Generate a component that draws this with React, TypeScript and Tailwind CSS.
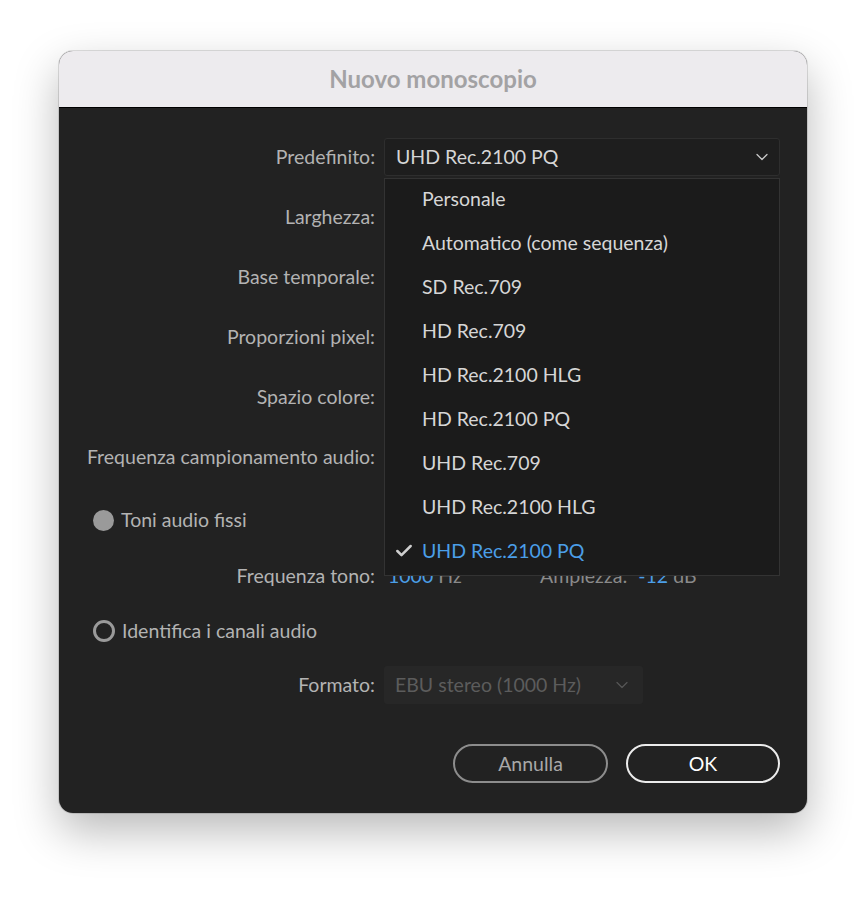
import { Check, ChevronDown } from 'lucide-react';

const presets = [
    'Personale',
    'Automatico (come sequenza)',
    'SD Rec.709',
    'HD Rec.709',
    'HD Rec.2100 HLG',
    'HD Rec.2100 PQ',
    'UHD Rec.709',
    'UHD Rec.2100 HLG',
    'UHD Rec.2100 PQ',
];

const selected = 'UHD Rec.2100 PQ';

function Label({ children }: { children: React.ReactNode }) {
    return (
        <div className="w-[316px] shrink-0 text-right pr-0 text-[#b3b3b3]">
            {children}
        </div>
    );
}

export default function App() {
    return (
        <div
            className="min-h-screen bg-white pt-[51px] pl-[59px]"
            style={{ fontFamily: 'Lato, "Liberation Sans", sans-serif' }}
        >
            <div className="w-[748px] h-[762px] rounded-[14px] overflow-hidden bg-[#222222] shadow-[0_18px_45px_rgba(0,0,0,0.28),0_0_0_1px_rgba(0,0,0,0.12)] flex flex-col">
                <div className="h-[57px] shrink-0 bg-[#edebee] border-b border-black flex items-center justify-center">
                    <span className="text-[24px] font-bold text-[#a3a2a4]">
                        Nuovo monoscopio
                    </span>
                </div>

                <div className="flex-1 flex flex-col pt-[19px] text-[19.5px]">
                    <div className="h-[60px] flex items-center">
                        <Label>Predefinito:</Label>
                        <div className="relative ml-[9px] w-[396px]">
                            <div className="h-[38px] flex items-center justify-between pl-[11px] pr-[7px] bg-[#1e1e1e] border border-[#2e2e2e] rounded-[3px] text-[#d6d6d6]">
                                <span>UHD Rec.2100 PQ</span>
                                <ChevronDown size={20} strokeWidth={1.5} className="text-[#c8c8c8]" />
                            </div>
                            <div className="absolute left-0 right-0 top-[40px] z-10 bg-[#1b1b1b] border border-[#333333]">
                                {presets.map((p) => (
                                    <div key={p} className="h-[44px] flex items-center pb-[4px]">
                                        <div className="w-[37px] flex justify-end pr-[8px]">
                                            {p === selected && (
                                                <Check size={20} strokeWidth={3} className="text-[#cfcfcf]" />
                                            )}
                                        </div>
                                        <span className={p === selected ? 'text-[#4b9fe8]' : 'text-[#d6d6d6]'}>
                                            {p}
                                        </span>
                                    </div>
                                ))}
                            </div>
                        </div>
                    </div>
                    <div className="h-[60px] flex items-center">
                        <Label>Larghezza:</Label>
                    </div>
                    <div className="h-[60px] flex items-center">
                        <Label>Base temporale:</Label>
                    </div>
                    <div className="h-[60px] flex items-center">
                        <Label>Proporzioni pixel:</Label>
                    </div>
                    <div className="h-[60px] flex items-center">
                        <Label>Spazio colore:</Label>
                    </div>
                    <div className="h-[60px] flex items-center">
                        <Label>Frequenza campionamento audio:</Label>
                    </div>

                    <div className="h-[66px] flex items-center pl-[34px] gap-[7px] text-[#b3b3b3]">
                        <span className="w-[21px] h-[21px] rounded-full bg-[#9a9a9a]" />
                        <span>Toni audio fissi</span>
                    </div>

                    <div className="h-[46px] flex items-center">
                        <Label>Frequenza tono:</Label>
                        <div className="ml-[13px] w-[152px] text-[#8a8a8a]">
                            <span className="text-[#4b9fe8]">1000</span> Hz
                        </div>
                        <span className="text-[#8a8a8a]">Ampiezza:</span>
                        <span className="ml-[11px] text-[#4b9fe8]">-12</span>
                        <span className="ml-[5px] text-[#8a8a8a]">dB</span>
                    </div>

                    <div className="h-[64px] flex items-center pl-[34px] gap-[7px] text-[#b3b3b3]">
                        <span className="w-[22px] h-[22px] rounded-full border-[3px] border-[#9a9a9a]" />
                        <span>Identifica i canali audio</span>
                    </div>

                    <div className="h-[44px] flex items-center">
                        <Label>Formato:</Label>
                        <div className="ml-[9px] w-[259px] h-[38px] flex items-center justify-between pl-[11px] pr-[11px] bg-[#272727] rounded-[3px] text-[#5c5c5c]">
                            <span>EBU stereo (1000 Hz)</span>
                            <ChevronDown size={20} strokeWidth={1.5} className="text-[#555555]" />
                        </div>
                    </div>

                    <div className="flex justify-end gap-[18px] pr-[27px] mt-[37px]">
                        <button className="w-[155px] h-[39px] rounded-full border-2 border-[#8d8d8d] text-[#a8a8a8]">
                            Annulla
                        </button>
                        <button className="w-[154px] h-[39px] rounded-full border-2 border-[#ececec] text-white">
                            OK
                        </button>
                    </div>
                </div>
            </div>
        </div>
    );
}
